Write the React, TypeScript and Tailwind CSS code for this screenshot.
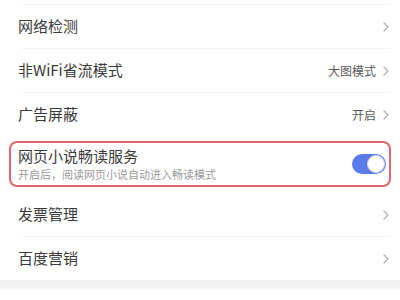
import { FC } from "react";

const Chevron: FC = () => (
  <svg width="8" height="12" viewBox="0 0 8 12" className="shrink-0">
    <polyline
      points="2,2 6,6 2,10"
      fill="none"
      stroke="#b0b0b0"
      strokeWidth="1.2"
      strokeLinecap="round"
      strokeLinejoin="round"
    />
  </svg>
);

interface RowProps {
  title: string;
  value?: string;
  line?: boolean;
}

const Row: FC<RowProps> = ({ title, value, line = true }) => (
  <div className="flex flex-col">
    <div className="flex items-center h-[43px] pl-[18px] pr-[10px]">
      <div className="flex-1 text-[15px] text-[#3a3a3a]">{title}</div>
      {value && <span className="text-[12px] text-[#5a5a5a] mr-[6px]">{value}</span>}
      <Chevron />
    </div>
    {line && <div className="h-px bg-[#f2f2f2] ml-[22px] mr-[10px]" />}
  </div>
);

const App: FC = () => {
  return (
    <div className="w-[400px] h-[300px] bg-white overflow-hidden flex flex-col font-['Noto_Sans_CJK_SC','Noto_Sans',sans-serif]">
      <div className="h-[4px]" />
      <div className="h-px bg-[#f2f2f2] ml-[22px] mr-[10px]" />
      <Row title="网络检测" />
      <Row title="非WiFi省流模式" value="大图模式" />
      <Row title="广告屏蔽" value="开启" line={false} />
      <div className="mx-[9px] mt-[5px] mb-[6px] h-[46px] border-2 border-[#e0646b] rounded-[8px] flex items-center pl-[7px] pr-[3px]">
        <div className="flex-1 flex flex-col">
          <div className="text-[15px] leading-[20px] text-[#3a3a3a]">网页小说畅读服务</div>
          <div className="text-[11px] leading-[15px] text-[#9a9a9a] mt-[1px]">
            开启后，阅读网页小说自动进入畅读模式
          </div>
        </div>
        <div className="w-[34px] h-[20px] rounded-full bg-[#5b7be9] flex items-center justify-end p-px">
          <div className="w-[18px] h-[18px] rounded-full bg-white border border-[#d6d9e6]" />
        </div>
      </div>
      <Row title="发票管理" />
      <Row title="百度营销" line={false} />
      <div className="h-[9px] bg-gradient-to-b from-[#f0f0f0] to-[#f7f7f7]" />
      <div className="flex-1 bg-white" />
    </div>
  );
};

export default App;
